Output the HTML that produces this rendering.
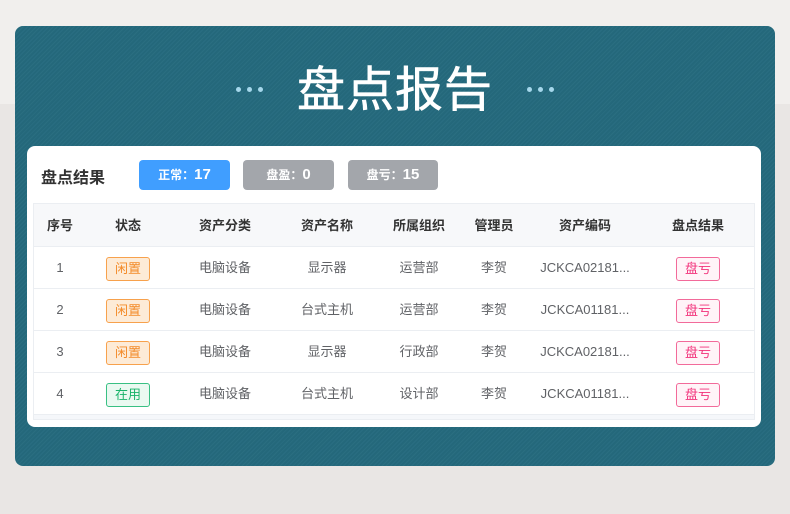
<!DOCTYPE html>
<html><head><meta charset="utf-8"><style>
*{margin:0;padding:0;box-sizing:border-box}
body{width:790px;height:514px;overflow:hidden;position:relative;background:#e9e6e4;font-family:"Liberation Sans","Noto Sans CJK SC",sans-serif}
.top{position:absolute;left:0;top:0;width:790px;height:104px;background:#f1efed}
.panel{position:absolute;left:15px;top:26px;width:760px;height:440px;border-radius:8px;background:#256b7e repeating-linear-gradient(135deg,rgba(255,255,255,0.025) 0 1px,rgba(0,0,0,0.025) 1px 3px)}
.title{position:absolute;left:0;top:62px;width:790px;text-align:center;color:#fff;font-size:48px;font-weight:400;line-height:58px;letter-spacing:1px;-webkit-text-stroke:0.6px #fff}
.dot{position:absolute;top:87px;width:5px;height:5px;border-radius:50%;background:#a6d8ec}
.card{position:absolute;left:27px;top:146px;width:734px;height:281px;background:#fff;border-radius:8px}
.lab{position:absolute;left:41px;top:164px;font-size:16px;font-weight:bold;color:#333}
.btn{position:absolute;top:160px;height:30px;border-radius:4px;color:#fff;font-size:12px;font-weight:bold;text-align:center;line-height:30px}
.btn b{font-size:15px}
.tbl{position:absolute;left:33px;top:203px;width:722px;height:217px;border:1px solid #ebeef2;background:#f5f7fa}
.row{position:absolute;left:34px;width:720px;height:42px;background:#fff;border-bottom:1px solid #ebeef2}
.c{position:absolute;top:0;height:42px;line-height:42px;font-size:13px;color:#606266;text-align:center;transform:translateX(-50%);white-space:nowrap}
.h .c{color:#333;font-weight:bold}
.tag{display:inline-block;height:24px;line-height:22px;padding:0 8px;border-radius:3px;border:1px solid;font-size:13px;vertical-align:middle}
.idle{color:#f38b2a;border-color:#f7a14c;background:#fdebd7}
.use{color:#19b26a;border-color:#38c083;background:#eaf9f1}
.loss{color:#f2317a;border-color:#f26a9a;background:#fff4f8}
</style></head><body>
<div class="top"></div>
<div class="panel"></div>
<div class="dot" style="left:236px"></div><div class="dot" style="left:247px"></div><div class="dot" style="left:258px"></div>
<div class="dot" style="left:527px"></div><div class="dot" style="left:538px"></div><div class="dot" style="left:549px"></div>
<div class="title">盘点报告</div>
<div class="card"></div>
<div class="lab">盘点结果</div>
<div class="btn" style="left:139px;width:91px;background:#409eff">正常：<b>17</b></div>
<div class="btn" style="left:243px;width:91px;background:#a3a6ab">盘盈：<b>0</b></div>
<div class="btn" style="left:348px;width:90px;background:#a3a6ab">盘亏：<b>15</b></div>
<div class="tbl"></div>
<div class="row h" style="top:204px;height:43px;background:#f7f8fa">
<div class="c" style="left:26px;line-height:43px">序号</div><div class="c" style="left:94px;line-height:43px">状态</div><div class="c" style="left:191px;line-height:43px">资产分类</div><div class="c" style="left:293px;line-height:43px">资产名称</div><div class="c" style="left:385px;line-height:43px">所属组织</div><div class="c" style="left:460px;line-height:43px">管理员</div><div class="c" style="left:551px;line-height:43px">资产编码</div><div class="c" style="left:664px;line-height:43px">盘点结果</div>
</div>
<div class="row" style="top:247px">
<div class="c" style="left:26px">1</div><div class="c" style="left:94px"><span class="tag idle">闲置</span></div><div class="c" style="left:191px">电脑设备</div><div class="c" style="left:293px">显示器</div><div class="c" style="left:385px">运营部</div><div class="c" style="left:460px">李贺</div><div class="c" style="left:551px">JCKCA02181...</div><div class="c" style="left:664px"><span class="tag loss">盘亏</span></div>
</div>
<div class="row" style="top:289px">
<div class="c" style="left:26px">2</div><div class="c" style="left:94px"><span class="tag idle">闲置</span></div><div class="c" style="left:191px">电脑设备</div><div class="c" style="left:293px">台式主机</div><div class="c" style="left:385px">运营部</div><div class="c" style="left:460px">李贺</div><div class="c" style="left:551px">JCKCA01181...</div><div class="c" style="left:664px"><span class="tag loss">盘亏</span></div>
</div>
<div class="row" style="top:331px">
<div class="c" style="left:26px">3</div><div class="c" style="left:94px"><span class="tag idle">闲置</span></div><div class="c" style="left:191px">电脑设备</div><div class="c" style="left:293px">显示器</div><div class="c" style="left:385px">行政部</div><div class="c" style="left:460px">李贺</div><div class="c" style="left:551px">JCKCA02181...</div><div class="c" style="left:664px"><span class="tag loss">盘亏</span></div>
</div>
<div class="row" style="top:373px">
<div class="c" style="left:26px">4</div><div class="c" style="left:94px"><span class="tag use">在用</span></div><div class="c" style="left:191px">电脑设备</div><div class="c" style="left:293px">台式主机</div><div class="c" style="left:385px">设计部</div><div class="c" style="left:460px">李贺</div><div class="c" style="left:551px">JCKCA01181...</div><div class="c" style="left:664px"><span class="tag loss">盘亏</span></div>
</div>
</body></html>
